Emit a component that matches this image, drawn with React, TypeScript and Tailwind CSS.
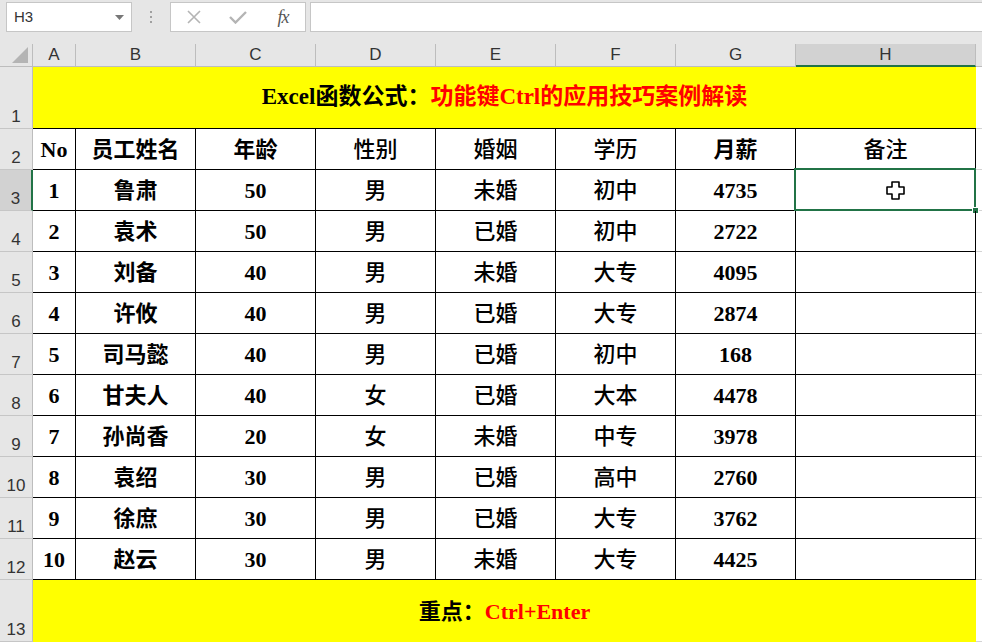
import React from "react";

const cols = ["A", "B", "C", "D", "E", "F", "G", "H"];
const weightCol = [
  "font-bold",
  "font-semibold",
  "font-bold",
  "font-medium",
  "font-medium",
  "font-medium",
  "font-bold",
  "font-medium",
];

const header = ["No", "员工姓名", "年龄", "性别", "婚姻", "学历", "月薪", "备注"];
const rows: string[][] = [
  ["1", "鲁肃", "50", "男", "未婚", "初中", "4735", ""],
  ["2", "袁术", "50", "男", "已婚", "初中", "2722", ""],
  ["3", "刘备", "40", "男", "未婚", "大专", "4095", ""],
  ["4", "许攸", "40", "男", "已婚", "大专", "2874", ""],
  ["5", "司马懿", "40", "男", "已婚", "初中", "168", ""],
  ["6", "甘夫人", "40", "女", "已婚", "大本", "4478", ""],
  ["7", "孙尚香", "20", "女", "未婚", "中专", "3978", ""],
  ["8", "袁绍", "30", "男", "已婚", "高中", "2760", ""],
  ["9", "徐庶", "30", "男", "已婚", "大专", "3762", ""],
  ["10", "赵云", "30", "男", "未婚", "大专", "4425", ""],
];

const cellFont = "font-['Liberation_Serif','Noto_Sans_CJK_SC',serif] text-[22px] text-black";
const hdrFont = "font-['Liberation_Sans','Noto_Sans',sans-serif] text-[17px] text-[#333]";

function RowHeader({ n, selected }: { n: number; selected?: boolean }) {
  return (
    <div
      className={
        "flex items-end justify-center pb-[1px] border-b border-[#c6c6c6] " +
        hdrFont +
        (selected
          ? " bg-[#d2d2d2] border-r-2 border-r-[#217346]"
          : " bg-[#e6e6e6] border-r border-r-[#bdbdbd]")
      }
    >
      <span className="leading-[20px]">{n}</span>
    </div>
  );
}

function Sliver() {
  return <div className="border-b border-[#d4d4d4] bg-white" />;
}

export default function App() {
  return (
    <div className="w-[982px] h-[642px] overflow-hidden bg-white select-none">
      {/* Toolbar */}
      <div className="h-[44px] bg-[#e6e6e6] flex items-start pt-[2px] pl-[6px]">
        <div className="w-[126px] h-[30px] bg-white border border-[#c6c6c6] flex items-center justify-between pl-[7px] pr-[7px]">
          <span className="font-['Liberation_Sans','Noto_Sans',sans-serif] text-[15px] text-[#333]">H3</span>
          <svg width="9" height="5" viewBox="0 0 9 5">
            <path d="M0 0 L9 0 L4.5 5 Z" fill="#777" />
          </svg>
        </div>
        <div className="w-[38px] h-[30px] flex flex-col items-center justify-center gap-[3px]">
          <div className="w-[2px] h-[2px] bg-[#a0a0a0]" />
          <div className="w-[2px] h-[2px] bg-[#a0a0a0]" />
          <div className="w-[2px] h-[2px] bg-[#a0a0a0]" />
        </div>
        <div className="w-[136px] h-[30px] bg-white border border-[#c6c6c6] flex items-center">
          <div className="w-[44px] flex justify-center pl-[2px]">
            <svg width="14" height="14" viewBox="0 0 14 14">
              <path d="M1 1 L13 13 M13 1 L1 13" stroke="#b4b4b4" strokeWidth="1.6" />
            </svg>
          </div>
          <div className="w-[46px] flex justify-center">
            <svg width="18" height="14" viewBox="0 0 18 14">
              <path d="M1 7 L6.5 12.5 L17 2" stroke="#b4b4b4" strokeWidth="2.4" fill="none" />
            </svg>
          </div>
          <div className="w-[44px] flex justify-center font-['Liberation_Serif',serif] italic text-[18px] text-[#555]">
            <span className="tracking-[-1px]">fx</span>
          </div>
        </div>
        <div className="ml-[4px] flex-1 h-[30px] bg-white border border-[#c6c6c6] border-r-0" />
      </div>

      {/* Sheet */}
      <div className="grid grid-cols-[33px_43px_120px_120px_120px_120px_120px_120px_180px_6px] grid-rows-[23px_62px_repeat(11,41px)_62px]">
        {/* corner */}
        <div className="bg-[#e6e6e6] border-r border-b border-[#bdbdbd] relative">
          <svg className="absolute right-[4px] bottom-[3px]" width="16" height="16" viewBox="0 0 16 16">
            <path d="M16 0 L16 16 L0 16 Z" fill="#b4b4b4" />
          </svg>
        </div>
        {cols.map((c) => (
          <div
            key={c}
            className={
              "flex items-end justify-center " +
              hdrFont +
              (c === "H"
                ? " bg-[#d2d2d2] border-b-2 border-b-[#217346] border-r border-r-[#bdbdbd] pb-0"
                : " bg-[#e6e6e6] border-b border-b-[#bdbdbd] border-r border-r-[#bdbdbd] pb-[1px]")
            }
          >
            <span className="leading-[20px]">{c}</span>
          </div>
        ))}
        <div className="bg-[#e6e6e6] border-b border-[#bdbdbd]" />

        {/* row 1 title */}
        <RowHeader n={1} />
        <div className={"col-span-8 bg-[#ffff00] border-b border-black flex items-center justify-center font-bold " + cellFont + " text-[23px]"}>
          <span>Excel函数公式：</span>
          <span className="text-[#ff0000]">功能键Ctrl的应用技巧案例解读</span>
        </div>
        <Sliver />

        {/* row 2 header */}
        <RowHeader n={2} />
        {header.map((h, i) => (
          <div
            key={i}
            className={"flex items-center justify-center border-r border-b border-black " + cellFont + " " + weightCol[i]}
          >
            {h}
          </div>
        ))}
        <Sliver />

        {rows.map((r, ri) => (
          <React.Fragment key={ri}>
            <RowHeader n={ri + 3} selected={ri === 0} />
            {r.map((v, ci) => (
              <div
                key={ci}
                className={"relative flex items-center justify-center border-r border-b border-black " + cellFont + " " + weightCol[ci]}
              >
                {v}
                {ri === 0 && ci === 7 && (
                  <>
                    <div className="absolute -left-[2px] -top-[2px] -right-[1px] -bottom-[1px] border-2 border-[#217346]" />
                    <div className="absolute -right-[4px] -bottom-[4px] w-[7px] h-[7px] bg-[#217346] border border-white" />
                    <svg className="absolute left-[90px] top-[11px]" width="19" height="19" viewBox="0 0 19 19">
                      <path
                        d="M6 1 H13 V6 H18 V13 H13 V18 H6 V13 H1 V6 H6 Z"
                        fill="white"
                        stroke="black"
                        strokeWidth="1.6"
                        strokeLinejoin="round"
                      />
                    </svg>
                  </>
                )}
              </div>
            ))}
            <Sliver />
          </React.Fragment>
        ))}

        {/* row 13 */}
        <RowHeader n={13} />
        <div className={"col-span-8 bg-[#ffff00] flex items-center justify-center font-bold " + cellFont}>
          <span>重点：</span>
          <span className="text-[#ff0000]">Ctrl+Enter</span>
        </div>
        <Sliver />
      </div>
    </div>
  );
}
